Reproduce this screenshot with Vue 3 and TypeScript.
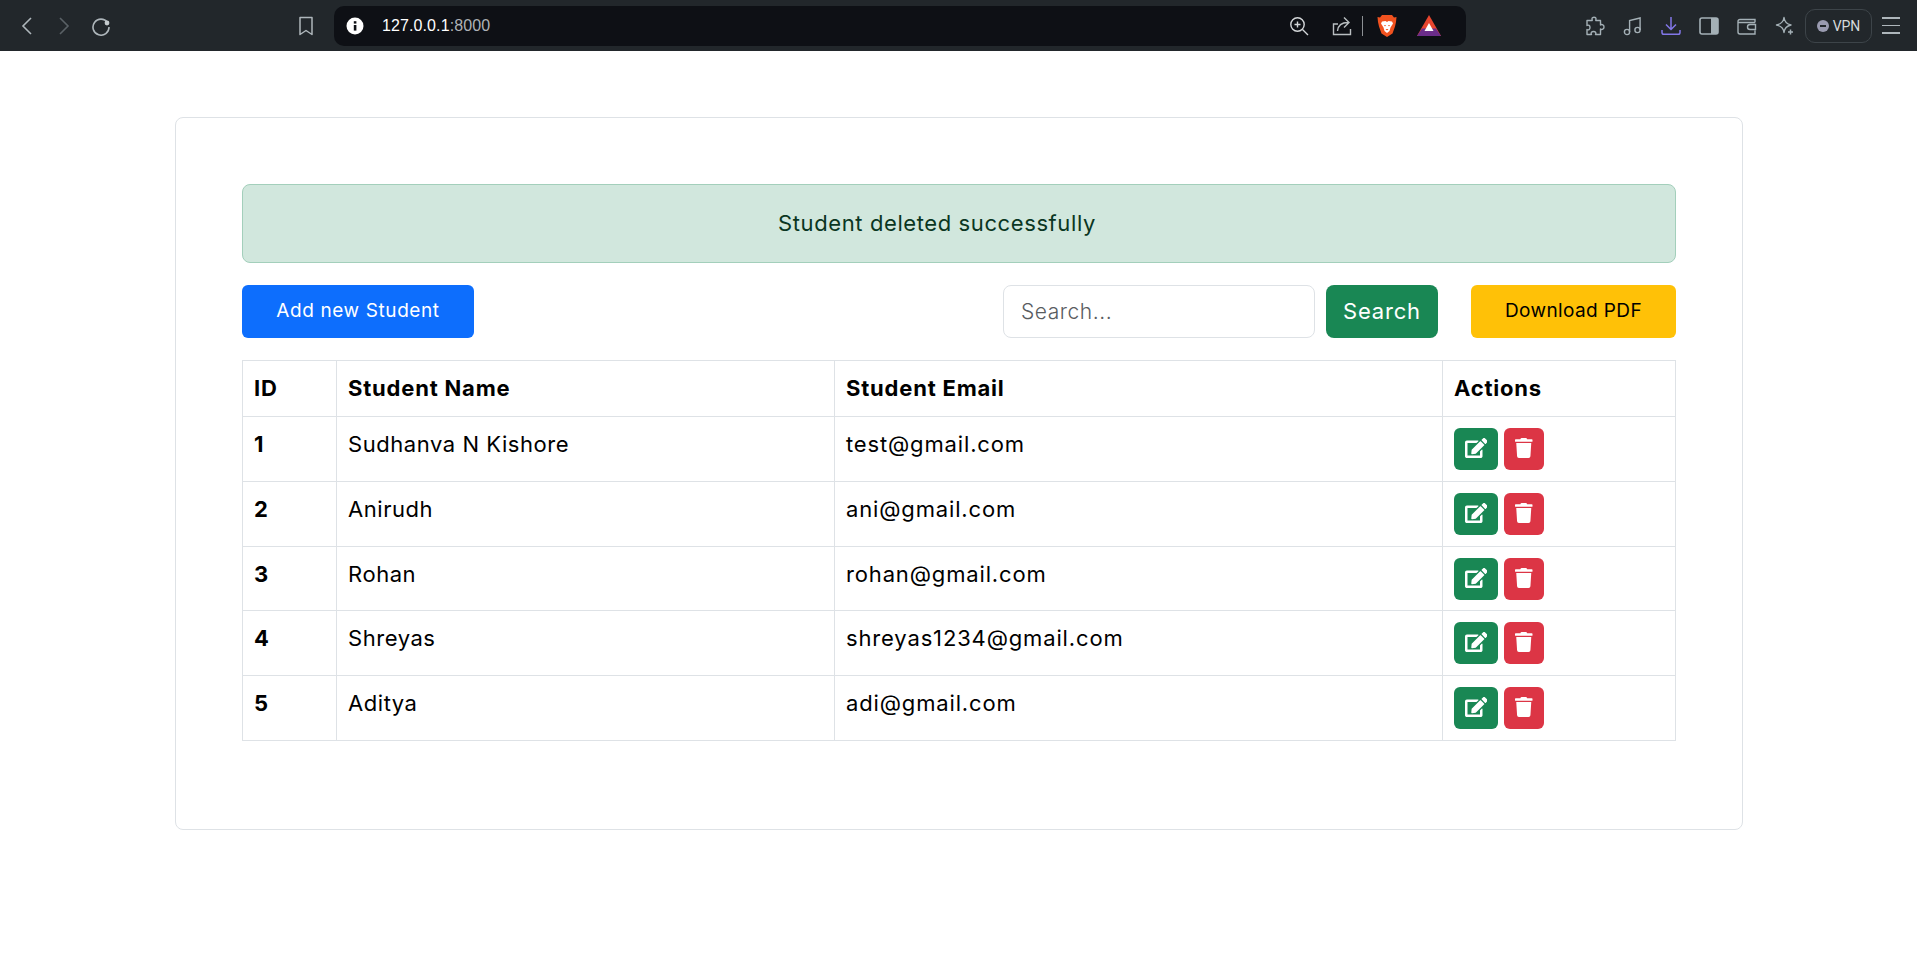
<script setup lang="ts">
interface Student { id: number; name: string; email: string }
const students: Student[] = [
  { id: 1, name: 'Sudhanva N Kishore', email: 'test@gmail.com' },
  { id: 2, name: 'Anirudh', email: 'ani@gmail.com' },
  { id: 3, name: 'Rohan', email: 'rohan@gmail.com' },
  { id: 4, name: 'Shreyas', email: 'shreyas1234@gmail.com' },
  { id: 5, name: 'Aditya', email: 'adi@gmail.com' },
]
</script>

<template>
  <div class="page">
    <header class="chrome">
      <div class="nav">
        <svg class="ic" width="18" height="20" viewBox="0 0 18 20"><path d="M13 2 5 10l8 8" fill="none" stroke="#aeb6bb" stroke-width="1.6"/></svg>
        <svg class="ic fwd" width="18" height="20" viewBox="0 0 18 20"><path d="m5 2 8 8-8 8" fill="none" stroke="#5a6166" stroke-width="1.6"/></svg>
        <svg class="ic reload" width="20" height="20" viewBox="0 0 20 20"><path d="M16.5 6.5A8 8 0 1 0 18 11" fill="none" stroke="#aeb6bb" stroke-width="1.6"/><circle cx="16" cy="7" r="2.4" fill="#c4cacd"/></svg>
      </div>
      <svg class="bookmark" width="16" height="20" viewBox="0 0 16 20"><path d="M2 1.5h12v17l-6-4-6 4z" fill="none" stroke="#aeb6bb" stroke-width="1.5" stroke-linejoin="round"/></svg>
      <div class="url">
        <svg width="18" height="18" viewBox="0 0 18 18"><circle cx="9" cy="9" r="8.5" fill="#fff"/><rect x="7.8" y="8" width="2.6" height="5.6" fill="#0e1015"/><rect x="7.8" y="4.2" width="2.6" height="2.4" fill="#0e1015"/></svg>
        <span class="addr"><b>127.0.0.1</b>:8000</span>
        <span class="spacer"></span>
        <svg width="20" height="20" viewBox="0 0 20 20"><circle cx="8.5" cy="8.5" r="6.7" fill="none" stroke="#d4d7d9" stroke-width="1.4"/><path d="M13.5 13.5 19 19M8.5 5.5v6M5.5 8.5h6" stroke="#d4d7d9" stroke-width="1.4"/></svg>
        <svg class="share" width="20" height="20" viewBox="0 0 20 20"><path d="M6 8H1.500v10.500h17V13" fill="none" stroke="#b9bec1" stroke-width="1.400"/><path d="M5.500 15C6 9.500 9 6.500 16 6.500M12 1.500l5 5-5 5" fill="none" stroke="#b9bec1" stroke-width="1.400"/></svg>
        <i class="sep"></i>
        <svg class="brave" width="20" height="24" viewBox="0 0 20 24"><path d="M5 1h10l2 2.500 2.500-.5-.5 5-1 4.500-2.500 7L10 23l-5.500-3.500-2.500-7L1 8 .5 3 3 3.500z" fill="#f1521f"/><path d="M5 7.500 8.500 7 10 8l1.500-1L15 7.500l1 2-2.500 4-1 3.500-2.500 2-2.500-2-1-3.500-2.500-4z" fill="#fff"/><path d="M7 11h2l-1 1.500zM11 11h2l-1 1.500zM8.500 15h3L10 16.500z" fill="#f1521f"/></svg>
        <svg class="bat" width="24" height="21" viewBox="0 0 24 21"><path d="M12 0 24 21H0z" fill="#e8452e"/><path d="M0 21 5 13.500h14L24 21z" fill="#6b2d8a"/><path d="m12 8 4.500 8h-9z" fill="#fff"/></svg>
      </div>
      <div class="tools">
        <svg width="20" height="20" viewBox="0 0 20 20"><path d="M7 2.500C7 .8 11 .8 11 2.500L10.800 4.500H15.500V9C17 8 19 8.800 19 11S17 14 15.500 13V18.500H10.500C11.500 17 10.500 15.500 8.500 15.500S5.500 17 6.500 18.500H2V13.500C3.500 14.500 5 13.500 5 11.500S3.500 8.500 2 9.500V4.500H7.200z" fill="none" stroke="#a4b0b6" stroke-width="1.400" stroke-linejoin="round"/></svg>
        <svg width="20" height="20" viewBox="0 0 20 20"><circle cx="4" cy="16" r="2.600" fill="none" stroke="#a4b0b6" stroke-width="1.400"/><circle cx="14.500" cy="14" r="2.600" fill="none" stroke="#a4b0b6" stroke-width="1.400"/><path d="M6.600 16V4.500L17.100 2v12" fill="none" stroke="#a4b0b6" stroke-width="1.400"/></svg>
        <svg width="20" height="20" viewBox="0 0 20 20"><path d="M10 1v12M5 8.500l5 5 5-5M1 14v2.500c0 1 .7 1.800 1.800 1.800h14.400c1.100 0 1.800-.8 1.800-1.800V14" fill="none" stroke="#8277e8" stroke-width="1.500"/></svg>
        <svg width="20" height="20" viewBox="0 0 20 20"><rect x="1" y="2" width="18" height="16" rx="2" fill="none" stroke="#a4b0b6" stroke-width="1.600"/><rect x="12" y="2" width="7" height="16" fill="#a4b0b6"/></svg>
        <svg width="20" height="20" viewBox="0 0 20 20"><path d="M18 6.500V3.500H3c-1.200 0-2 .8-2 2v10.500c0 1.200.8 2 2 2h15v-3.500M1 6.500h17M18.500 8.500H13a2 2 0 0 0 0 5h5.500z" fill="none" stroke="#a4b0b6" stroke-width="1.400"/></svg>
        <svg width="20" height="20" viewBox="0 0 20 20"><path d="M9 1.500C9.500 6 11.500 8 16 9c-4.500 1-6.500 3-7 7.500C8.500 12 6.500 10 1.500 9 6.500 8 8.500 6 9 1.500z" fill="none" stroke="#a4b0b6" stroke-width="1.400" stroke-linejoin="round"/><path d="M15.500 13.500v5M13 16h5" stroke="#a4b0b6" stroke-width="1.500"/></svg>
        <div class="vpn"><i class="dot"></i>VPN</div>
        <div class="menu"><i></i><i></i><i></i></div>
      </div>
    </header>

    <main class="card">
      <div class="alert">Student deleted successfully</div>
      <div class="bar">
        <button class="btn blue add">Add new Student</button>
        <div class="right">
          <input class="search" type="text" placeholder="Search..." />
          <button class="btn green go">Search</button>
          <button class="btn yellow pdf">Download PDF</button>
        </div>
      </div>
      <table>
        <colgroup>
          <col class="c1" /><col class="c2" /><col class="c3" /><col class="c4" />
        </colgroup>
        <thead>
          <tr><th>ID</th><th>Student Name</th><th>Student Email</th><th>Actions</th></tr>
        </thead>
        <tbody>
          <tr v-for="s in students" :key="s.id">
            <th>{{ s.id }}</th>
            <td>{{ s.name }}</td>
            <td class="email">{{ s.email }}</td>
            <td class="acts">
              <a class="act green edit">
                <svg width="22.500" height="20" viewBox="0 0 576 512"><path fill="#fff" d="M402.600 83.200l90.200 90.200c3.800 3.800 3.800 10 0 13.800L274.400 405.600l-92.800 10.300c-12.400 1.400-22.900-9.100-21.500-21.500l10.300-92.800L388.800 83.200c3.800-3.800 10-3.800 13.800 0zm162-22.900l-48.800-48.800c-15.200-15.200-39.900-15.200-55.200 0l-35.400 35.400c-3.800 3.800-3.800 10 0 13.800l90.200 90.200c3.800 3.800 10 3.800 13.800 0l35.400-35.400c15.200-15.300 15.200-40 0-55.200zM384 346.200V448H64V128h229.800c3.200 0 6.200-1.300 8.500-3.500l40-40c7.600-7.600 2.200-20.500-8.500-20.500H48C21.500 64 0 85.500 0 112v352c0 26.500 21.500 48 48 48h352c26.500 0 48-21.500 48-48V306.200c0-10.700-12.900-16-20.500-8.500l-40 40c-2.200 2.300-3.500 5.300-3.500 8.500z"/></svg>
              </a>
              <a class="act red del">
                <svg width="17.500" height="20" viewBox="0 0 448 512"><path fill="#fff" d="M432 32H312l-9.400-18.700A24 24 0 0 0 281.100 0H166.800a23.720 23.720 0 0 0-21.400 13.300L136 32H16A16 16 0 0 0 0 48v32a16 16 0 0 0 16 16h416a16 16 0 0 0 16-16V48a16 16 0 0 0-16-16zM53.200 467a48 48 0 0 0 47.900 45h245.800a48 48 0 0 0 47.900-45L416 128H32z"/></svg>
              </a>
            </td>
          </tr>
        </tbody>
      </table>
    </main>
  </div>
</template>

<style>
html, body { background: #fff; }
</style>

<style scoped>
.page { width: 1917px; font-family: "Inter", "Open Sans", sans-serif; color: #000; }
.chrome { height: 51px; background: #22272b; display: flex; align-items: center; box-sizing: border-box; padding-left: 18px; }
.nav { display: flex; align-items: center; width: 280px; }
.ic { display: block; }
.fwd { margin-left: 19px; }
.reload { margin-left: 18px; }
.bookmark { margin-right: 20px; }
.url { width: 1132px; height: 40px; box-sizing: border-box; background: #0e1015; border-radius: 10px; display: flex; align-items: center; padding: 0 25px 0 12px; }
.addr { margin-left: 18px; color: #aeb3b7; font: 16px "Liberation Sans", sans-serif; letter-spacing: .1px; }
.addr b { color: #fff; font-weight: 400; }
.spacer { flex: 1; }
.share { margin-left: 23px; }
.sep { width: 1px; height: 20px; background: #8c9094; margin: 0 14px 0 10px; }
.bat { margin-left: 20px; }
.tools { display: flex; align-items: center; gap: 18px; margin-left: 119px; }
.vpn { width: 67px; height: 34px; box-sizing: border-box; margin-left: -8px; border: 1px solid #3d4449; border-radius: 10px; display: flex; align-items: center; justify-content: center; gap: 4px; color: #d6dadc; font: 14px "Roboto", sans-serif; }
.dot { width: 12px; height: 12px; border-radius: 50%; background: #9a9bb0; position: relative; }
.dot::after { content: ""; position: absolute; left: 3px; right: 3px; top: 5px; height: 2px; background: #22272b; }
.menu { width: 18px; display: flex; flex-direction: column; gap: 6px; margin-left: -8px; }
.menu i { height: 1.500px; background: #aeb6bb; display: block; }

.card { width: 1568px; height: 713px; box-sizing: border-box; margin: 66px 0 0 175px; padding: 66px; border: 1px solid #dee2e6; border-radius: 8px; background: #fff; }
.alert { height: 79px; box-sizing: border-box; display: flex; align-items: center; justify-content: center; padding: 0 44px 2px 0; background: #d1e7dd; border: 1px solid #a3cfbb; border-radius: 8px; color: #0a3622; font-size: 22px; font-weight: 400; letter-spacing: .6px; }
.bar { display: flex; justify-content: space-between; margin: 22px 0; }
.right { display: flex; }
.btn { height: 53px; border: 0; border-radius: 6px; font-family: inherit; font-size: 19px; padding: 0; }
.blue { background: #0d6efd; color: #fff; }
.green { background: #198754; color: #fff; }
.yellow { background: #ffc107; color: #000; }
.red { background: #dc3545; }
.add { width: 232px; letter-spacing: .6px; padding-bottom: 2px; }
.search { width: 312px; height: 53px; box-sizing: border-box; border: 1px solid #dee2e6; border-radius: 8px; padding: 0 17px; font-family: inherit; font-size: 21px; font-weight: 300; letter-spacing: .55px; outline: none; }
.search::placeholder { color: #595c5f; opacity: 1; }
.go { width: 112px; margin-left: 11px; border-radius: 8px; font-size: 22px; letter-spacing: .8px; padding-bottom: 2px; }
.pdf { width: 205px; margin-left: 33px; letter-spacing: .4px; padding-bottom: 2px; }
table { width: 1433px; table-layout: fixed; border-collapse: collapse; font-size: 22px; }
.c1 { width: 94px; }
.c2 { width: 498px; }
.c3 { width: 608px; }
.c4 { width: 233px; }
th, td { border: 1px solid #dee2e6; padding: 12px 11px; text-align: left; vertical-align: top; line-height: 31px; font-weight: 400; letter-spacing: .55px; }
th { font-weight: 700; letter-spacing: .8px; }
thead th { height: 55px; box-sizing: border-box; }
tbody tr { height: 64.800px; }
.email { letter-spacing: .85px; }
.acts { padding: 11px 11px 10px; line-height: 0; }
.act { display: inline-flex; align-items: center; justify-content: center; height: 42px; border-radius: 6px; vertical-align: top; }
.edit { width: 44px; padding-bottom: 2px; box-sizing: border-box; }
.del { width: 40px; margin-left: 6px; padding-bottom: 2px; box-sizing: border-box; }
</style>
